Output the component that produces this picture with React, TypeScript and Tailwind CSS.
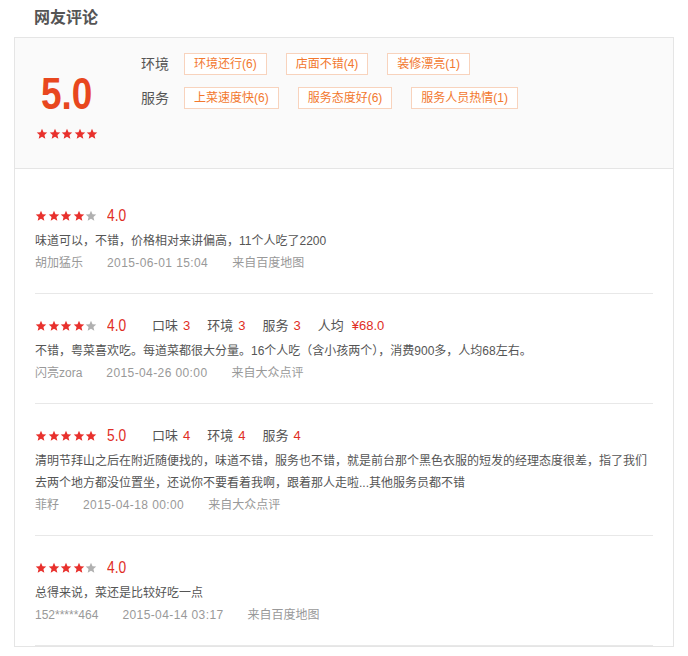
import React from 'react';

interface Review {
    id: number;
    score: number;
    subs?: { label: string; value: string }[];
    text: string;
    user: string;
    time: string;
    source: string;
}

const tagRows = [
    { label: '环境', tags: ['环境还行(6)', '店面不错(4)', '装修漂亮(1)'] },
    { label: '服务', tags: ['上菜速度快(6)', '服务态度好(6)', '服务人员热情(1)'] },
];

const reviews: Review[] = [
    {
        id: 1,
        score: 4,
        text: '味道可以，不错，价格相对来讲偏高，11个人吃了2200',
        user: '胡加猛乐',
        time: '2015-06-01 15:04',
        source: '来自百度地图',
    },
    {
        id: 2,
        score: 4,
        subs: [
            { label: '口味', value: '3' },
            { label: '环境', value: '3' },
            { label: '服务', value: '3' },
            { label: '人均', value: '¥68.0' },
        ],
        text: '不错，粤菜喜欢吃。每道菜都很大分量。16个人吃（含小孩两个），消费900多，人均68左右。',
        user: '闪亮zora',
        time: '2015-04-26 00:00',
        source: '来自大众点评',
    },
    {
        id: 3,
        score: 5,
        subs: [
            { label: '口味', value: '4' },
            { label: '环境', value: '4' },
            { label: '服务', value: '4' },
        ],
        text: '清明节拜山之后在附近随便找的，味道不错，服务也不错，就是前台那个黑色衣服的短发的经理态度很差，指了我们去两个地方都没位置坐，还说你不要看着我啊，跟着那人走啦...其他服务员都不错',
        user: '菲籽',
        time: '2015-04-18 00:00',
        source: '来自大众点评',
    },
    {
        id: 4,
        score: 4,
        text: '总得来说，菜还是比较好吃一点',
        user: '152*****464',
        time: '2015-04-14 03:17',
        source: '来自百度地图',
    },
];

function Star({ on }: { on: boolean }) {
    return (
        <svg viewBox="0 0 24 24" className="w-3 h-3">
            <path
                d="M12 1.5l3.09 7.02 7.41.56-5.64 4.86 1.76 7.56L12 17.48 5.38 21.5l1.76-7.56L1.5 9.08l7.41-.56z"
                fill={on ? '#e8302c' : '#b0b0b0'}
            />
        </svg>
    );
}

function Stars({ count }: { count: number }) {
    return (
        <div className="flex gap-[0.5px]">
            {[1, 2, 3, 4, 5].map((i) => (
                <Star key={i} on={i <= count} />
            ))}
        </div>
    );
}

export default function App() {
    return (
        <div
            className="min-h-screen bg-white px-[14px] text-[12px] text-[#555]"
            style={{ fontFamily: '"Liberation Sans", "Noto Sans CJK SC", sans-serif' }}
        >
            <h2 className="h-[37px] pl-5 text-[16px] font-bold leading-[36px] text-[#555]">网友评论</h2>

            <div className="border border-[#e5e5e5]">
                {/* Summary */}
                <div className="flex h-[130px] bg-[#fafafa]">
                    <div className="flex w-[104px] flex-col items-center pt-[34px]">
                        <div className="inline-block scale-x-[0.84] text-[44px] font-bold leading-[44px] text-[#e8471e]">
                            5.0
                        </div>
                        <div className="mt-3">
                            <Stars count={5} />
                        </div>
                    </div>
                    <div className="ml-[22px] flex flex-col gap-3 pt-[15px]">
                        {tagRows.map((row) => (
                            <div key={row.label} className="flex items-center">
                                <span className="w-[43px] text-[14px] text-[#555]">{row.label}</span>
                                <div className="flex gap-[19px]">
                                    {row.tags.map((tag) => (
                                        <span
                                            key={tag}
                                            className="h-[22px] border border-[#f8d3bd] bg-white px-[9px] leading-[20px] text-[#f2782e]"
                                        >
                                            {tag}
                                        </span>
                                    ))}
                                </div>
                            </div>
                        ))}
                    </div>
                </div>

                {/* Review list */}
                <div className="border-t border-[#e5e5e5] bg-white px-5 pt-[15px]">
                    {reviews.map((r) => (
                        <div key={r.id} className="border-b border-[#e8e8e8] pb-[19px] pt-[22px]">
                            <div className="flex h-5 items-center">
                                <Stars count={r.score} />
                                <span className="ml-[10px] inline-block w-[20px] origin-left scale-x-[0.86] whitespace-nowrap text-[16px] text-[#e02e24]">
                                    {r.score.toFixed(1)}
                                </span>
                                {r.subs && (
                                    <div className="ml-[25px] flex gap-[17px] text-[13px]">
                                        {r.subs.map((s) => (
                                            <span key={s.label}>
                                                {s.label}
                                                <span className={s.value.startsWith('¥') ? 'ml-2 text-[#e02e24]' : 'ml-[5px] text-[#e02e24]'}>
                                                    {s.value}
                                                </span>
                                            </span>
                                        ))}
                                    </div>
                                )}
                            </div>
                            <p className="mt-1 leading-[22px] text-[#555]">{r.text}</p>
                            <div className="flex gap-6 leading-[22px] text-[#999]">
                                <span>{r.user}</span>
                                <span className="tracking-[0.4px]">{r.time}</span>
                                <span>{r.source}</span>
                            </div>
                        </div>
                    ))}
                </div>
            </div>
        </div>
    );
}
